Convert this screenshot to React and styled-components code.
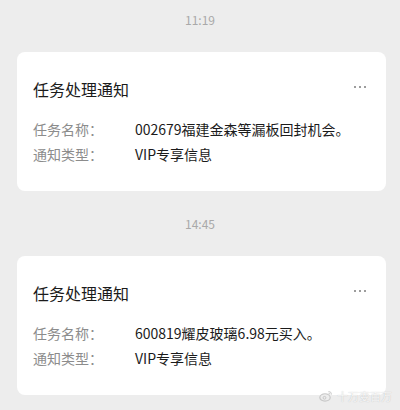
import React from 'react';
import styled, { createGlobalStyle } from 'styled-components';

const GlobalStyle = createGlobalStyle`
  html, body {
    margin: 0;
    padding: 0;
    background: #ededed;
  }
  body {
    font-family: "Noto Sans CJK SC", "Noto Sans", sans-serif;
  }
`;

const Page = styled.div`
  position: relative;
  width: 400px;
  height: 410px;
  overflow: hidden;
  background: #ededed;
  padding-top: 13px;
  box-sizing: border-box;
`;

const Time = styled.div`
  text-align: center;
  font-size: 12px;
  line-height: 14px;
  color: #a9a9a9;
  margin-bottom: 25px;
`;

const Card = styled.div`
  margin: 0 14px 26px 17px;
  background: #fff;
  border-radius: 8px;
  padding: 25px 20px 24px 16px;
`;

const Header = styled.div`
  display: flex;
  justify-content: space-between;
  align-items: center;
  margin-bottom: 16px;
`;

const Title = styled.div`
  font-size: 16px;
  line-height: 24px;
  color: #1b1b1b;
`;

const More = styled.div`
  display: flex;
  gap: 2.5px;
  margin-top: -4px;
  span {
    width: 2.5px;
    height: 2.5px;
    background: #9d9d9d;
  }
`;

const Row = styled.div`
  display: flex;
  font-size: 14px;
  line-height: 25px;
`;

const Label = styled.div`
  width: 102px;
  color: #8c8c8c;
  flex-shrink: 0;
`;

const Value = styled.div`
  color: #1b1b1b;
  white-space: nowrap;
`;

const Watermark = styled.div`
  position: absolute;
  right: 8px;
  bottom: 6px;
  display: flex;
  align-items: center;
  gap: 4px;
  font-size: 11px;
  color: rgba(255, 255, 255, 0.85);
  text-shadow: 0 0 1px rgba(0, 0, 0, 0.25);
`;

const messages = [
  { time: '11:19', name: '002679福建金森等漏板回封机会。', type: 'VIP专享信息' },
  { time: '14:45', name: '600819耀皮玻璃6.98元买入。', type: 'VIP专享信息' },
];

function WeiboLogo() {
  return (
    <svg width="14" height="12" viewBox="0 0 14 12">
      <ellipse cx="6" cy="7.5" rx="5.2" ry="3.6" fill="none" stroke="#c8c8c8" strokeWidth="1.2" />
      <circle cx="5.5" cy="7.8" r="1.4" fill="none" stroke="#c8c8c8" strokeWidth="1" />
      <path d="M9.5 1.5a3 3 0 0 1 3 3M9.5 3.2a1.4 1.4 0 0 1 1.4 1.4" fill="none" stroke="#c8c8c8" strokeWidth="1" />
    </svg>
  );
}

export default function App() {
  return (
    <Page>
      <GlobalStyle />
      {messages.map(m => (
        <div key={m.time}>
          <Time>{m.time}</Time>
          <Card>
            <Header>
              <Title>任务处理通知</Title>
              <More><span /><span /><span /></More>
            </Header>
            <Row>
              <Label>任务名称：</Label>
              <Value>{m.name}</Value>
            </Row>
            <Row>
              <Label>通知类型：</Label>
              <Value>{m.type}</Value>
            </Row>
          </Card>
        </div>
      ))}
      <Watermark>
        <WeiboLogo />
        <span>十万变百万</span>
      </Watermark>
    </Page>
  );
}
